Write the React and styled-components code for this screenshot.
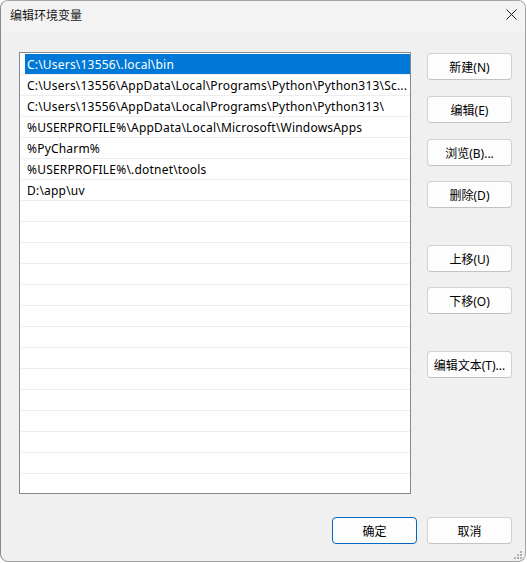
import styled, { createGlobalStyle } from 'styled-components';

const GlobalStyle = createGlobalStyle`
  html, body {
    margin: 0;
    padding: 0;
    background: #ffffff;
  }
  body {
    font-family: "Noto Sans", "Noto Sans CJK SC", sans-serif;
    font-size: 12px;
  }
`;

const Window = styled.div`
  position: relative;
  width: 526px;
  height: 562px;
  box-sizing: border-box;
  border: 1px solid #a3a3a3;
  border-left-color: #8a8a8a;
  border-radius: 8px;
  background: #f0f0f0;
  display: flex;
  flex-direction: column;
  overflow: hidden;
`;

const TitleBar = styled.div`
  height: 30px;
  flex-shrink: 0;
  box-sizing: border-box;
  background: #f3f3f3;
  display: flex;
  align-items: center;
  justify-content: space-between;
  padding: 0 9px 3px 9px;
  color: #1a1a1a;
  font-family: "Noto Sans CJK SC", sans-serif;
  font-size: 12px;
`;

const CloseIcon = styled.svg`
  width: 11px;
  height: 11px;
  margin-right: -1px;
`;

const Body = styled.div`
  flex: 1;
  display: flex;
  flex-direction: column;
  padding: 21px 13px 17px 18px;
`;

const Main = styled.div`
  display: flex;
  gap: 16px;
`;

const ListBox = styled.div`
  width: 392px;
  height: 442px;
  box-sizing: border-box;
  border: 1px solid #848890;
  background: #ffffff;
  padding-top: 1px;
  overflow: hidden;
`;

const Row = styled.div`
  height: 20px;
  margin-left: 1px;
  border-bottom: 1px solid #ededed;
  display: flex;
`;

const Cell = styled.div`
  flex: 1;
  margin-left: 4px;
  padding-left: 2px;
  display: flex;
  align-items: center;
  white-space: nowrap;
  overflow: hidden;
  font-family: "Noto Sans", sans-serif;
  font-size: 12px;
  letter-spacing: 0.2px;
  color: ${(p) => (p.$selected ? '#ffffff' : '#000000')};
  background: ${(p) => (p.$selected ? '#0078d7' : 'transparent')};
`;

const ButtonColumn = styled.div`
  display: flex;
  flex-direction: column;
  padding-top: 1px;
`;

const Button = styled.button`
  width: 85px;
  height: 27px;
  box-sizing: border-box;
  margin-top: ${(p) => p.$top || 0}px;
  border: 1px solid ${(p) => (p.$default ? '#0067c0' : '#d1d1d1')};
  border-bottom-color: ${(p) => (p.$default ? '#0067c0' : '#c2c2c2')};
  border-radius: 4px;
  background: #fdfdfd;
  color: #000000;
  font-family: "Noto Sans", "Noto Sans CJK SC", sans-serif;
  font-size: 12px;
  padding: 0;
  display: flex;
  align-items: center;
  justify-content: center;
`;

const Footer = styled.div`
  margin-top: auto;
  display: flex;
  justify-content: flex-end;
  gap: 10px;
`;

const Grip = styled.svg`
  position: absolute;
  right: 3px;
  bottom: 2px;
  width: 9px;
  height: 9px;
`;

const paths = [
  'C:\\Users\\13556\\.local\\bin',
  'C:\\Users\\13556\\AppData\\Local\\Programs\\Python\\Python313\\Sc...',
  'C:\\Users\\13556\\AppData\\Local\\Programs\\Python\\Python313\\',
  '%USERPROFILE%\\AppData\\Local\\Microsoft\\WindowsApps',
  '%PyCharm%',
  '%USERPROFILE%\\.dotnet\\tools',
  'D:\\app\\uv',
];

const sideButtons = [
  { label: '新建(N)', top: 0 },
  { label: '编辑(E)', top: 16 },
  { label: '浏览(B)...', top: 16 },
  { label: '删除(D)', top: 15 },
  { label: '上移(U)', top: 37 },
  { label: '下移(O)', top: 15 },
  { label: '编辑文本(T)...', top: 37 },
];

export default function App() {
  const rows = [];
  for (let i = 0; i < 20; i++) {
    rows.push(paths[i] || '');
  }

  return (
    <>
      <GlobalStyle />
      <Window>
        <TitleBar>
          <span>编辑环境变量</span>
          <CloseIcon viewBox="0 0 11 11">
            <path d="M0.5 0.5 L10.5 10.5 M10.5 0.5 L0.5 10.5" stroke="#1a1a1a" strokeWidth="1" />
          </CloseIcon>
        </TitleBar>
        <Body>
          <Main>
            <ListBox>
              {rows.map((text, i) => (
                <Row key={i}>
                  <Cell $selected={i === 0}>{text}</Cell>
                </Row>
              ))}
            </ListBox>
            <ButtonColumn>
              {sideButtons.map((b) => (
                <Button key={b.label} $top={b.top}>
                  {b.label}
                </Button>
              ))}
            </ButtonColumn>
          </Main>
          <Footer>
            <Button $default>确定</Button>
            <Button>取消</Button>
          </Footer>
        </Body>
        <Grip viewBox="0 0 9 9">
          <rect x="7" y="1" width="2" height="2" fill="#b0b0b0" />
          <rect x="4" y="4" width="2" height="2" fill="#b0b0b0" />
          <rect x="7" y="4" width="2" height="2" fill="#b0b0b0" />
          <rect x="1" y="7" width="2" height="2" fill="#b0b0b0" />
          <rect x="4" y="7" width="2" height="2" fill="#b0b0b0" />
          <rect x="7" y="7" width="2" height="2" fill="#b0b0b0" />
        </Grip>
      </Window>
    </>
  );
}
